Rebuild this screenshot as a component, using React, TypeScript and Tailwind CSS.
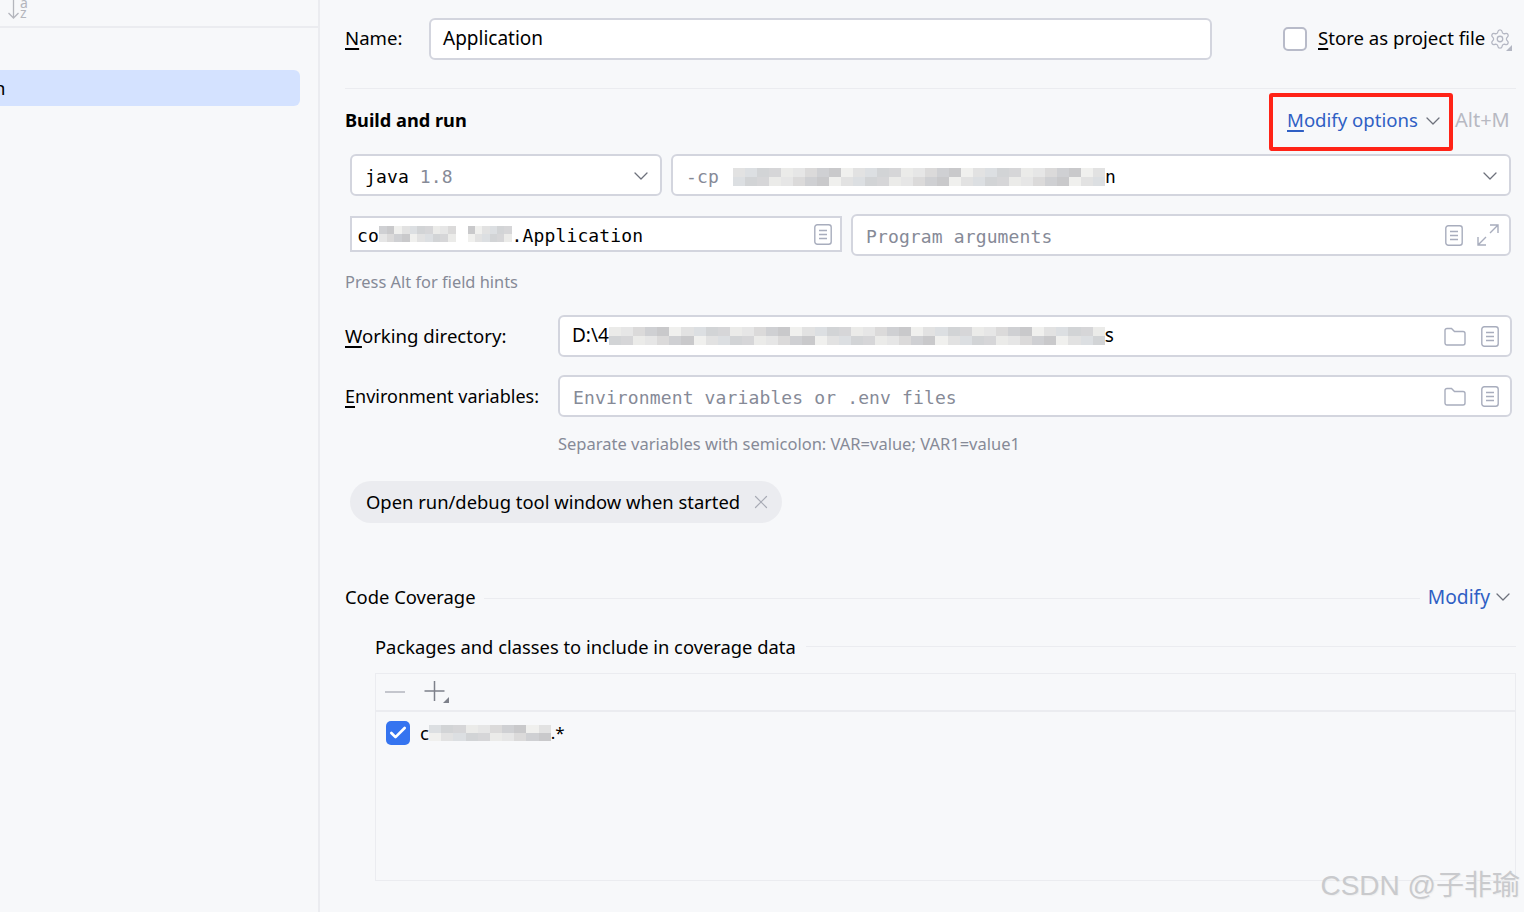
import React from 'react';
import { ChevronDown, X, Settings, Check } from 'lucide-react';

// --- Shared Components ---

const UI = "font-['Noto_Sans','Open_Sans',sans-serif]";
const MONO = "font-['DejaVu_Sans_Mono','Liberation_Mono',monospace] tracking-[0.13px]";

const Mosaic = ({ rows, cell = 12, high = 9 }: { rows: string[][], cell?: number, high?: number }) => (
    <span className="inline-flex flex-col align-middle shrink-0">
        {rows.map((row, i) => (
            <span key={i} className="flex">
                {row.map((c, j) => (
                    <span key={j} style={{ width: cell, height: high, backgroundColor: c }} />
                ))}
            </span>
        ))}
    </span>
);

const shades = ['#d6d6d8', '#e2e2e2', '#cfd0d3', '#ebebe9', '#dcdfe2', '#c9c9cb', '#e6e6e6', '#d2d4d6', '#f0f0ee', '#dbdada'];
const strip = (n: number, seed: number) => Array.from({ length: n }, (_, i) => shades[(i * 3 + seed) % shades.length]);

const NotesIcon = () => (
    <svg width="18" height="21" viewBox="0 0 18 21" fill="none" stroke="#a8adbd" strokeWidth="1.4">
        <rect x="0.8" y="0.8" width="16.4" height="19.4" rx="2.5" />
        <path d="M5 6.5h8M5 10.5h8M5 14.5h8" />
    </svg>
);

const FolderIcon = () => (
    <svg width="22" height="19" viewBox="0 0 22 19" fill="none" stroke="#a8adbd" strokeWidth="1.4">
        <path d="M1 3.5A2 2 0 0 1 3 1.5h4.5l3 3H19a2 2 0 0 1 2 2V16a2 2 0 0 1-2 2H3a2 2 0 0 1-2-2z" />
    </svg>
);

const ExpandIcon = () => (
    <svg width="22" height="22" viewBox="0 0 22 22" fill="none" stroke="#a8adbd" strokeWidth="1.4">
        <path d="M13 1h8v8M21 1l-8 8M1 13v8h8M1 21l8-8" />
    </svg>
);

const SortIcon = () => (
    <div className="flex items-start h-[26px] pl-2 overflow-hidden">
        <svg width="11" height="19" viewBox="0 0 11 19" fill="none" stroke="#b4b6bd" strokeWidth="1.3">
            <path d="M5.5 0v18M0.5 13l5 5 5-5" />
        </svg>
        <div className="flex flex-col text-[14px] leading-[9px] text-[#b4b6bd] ml-[1px] -mt-[2px]">
            <span>a</span>
            <span className="mt-[1px]">z</span>
        </div>
    </div>
);

const Field = ({ children, className }: { children: React.ReactNode, className: string }) => (
    <div className={`flex items-center shrink-0 bg-white border-2 border-[#d3d5de] rounded-[6px] h-[42px] ${className}`}>
        {children}
    </div>
);

const Mnemonic = ({ ch, rest, className = "decoration-black" }: { ch: string, rest: string, className?: string }) => (
    <span className="whitespace-nowrap">
        <span className={`underline underline-offset-[3px] decoration-2 ${className}`}>{ch}</span>{rest}
    </span>
);

const Chevron = ({ className = "" }: { className?: string }) => (
    <ChevronDown className={`w-[24px] h-[24px] shrink-0 text-[#6e717c] ${className}`} strokeWidth={1.3} />
);

const App = () => {
    return (
        <div className={`relative flex h-[912px] w-[1524px] overflow-hidden bg-[#f7f8fa] text-black text-[18.6px] whitespace-nowrap ${UI}`}>
            {/* Sidebar */}
            <aside className="w-[320px] shrink-0 border-r-2 border-[#ebecf0] h-full">
                <div className="h-[28px] border-b-2 border-[#ebecf0]">
                    <SortIcon />
                </div>
                <div className="mt-[42px] w-[300px] h-[36px] bg-[#d4e2ff] rounded-r-[6px] flex items-center overflow-hidden">
                    <span className="-ml-[6px] leading-none">n</span>
                </div>
            </aside>

            {/* Main */}
            <main className="flex-1 pl-[25px] pr-[8px] min-w-0">
                {/* Name row */}
                <div className="flex items-center mt-[18px] h-[42px]">
                    <div className="w-[84px] -mt-[2px]"><Mnemonic ch="N" rest="ame:" /></div>
                    <Field className="w-[783px] pl-[12px]"><span className="-mt-[2px] text-[19px]">Application</span></Field>
                    <div className="w-[24px] h-[24px] ml-[71px] shrink-0 bg-white border-2 border-[#b8bbc9] rounded-[5px]" />
                    <div className="ml-[11px] -mt-[2px]"><Mnemonic ch="S" rest="tore as project file" /></div>
                    <div className="relative ml-[4px] shrink-0">
                        <Settings className="w-[22px] h-[22px] text-[#b4b7c3]" strokeWidth={1.4} />
                        <svg className="absolute -right-[1px] -bottom-[1px]" width="6" height="6" viewBox="0 0 6 6">
                            <path d="M6 0v6H0z" fill="#b4b7c3" />
                        </svg>
                    </div>
                </div>

                <div className="mt-[28px] h-px bg-[#ebecf0]" />

                {/* Build and run header */}
                <div className="flex items-center h-[58px] mt-[4px]">
                    <span className="font-bold text-[18.2px] -mt-[3px]">Build and run</span>
                    <div className="ml-auto flex items-center h-[58px] w-[184px] border-[4px] border-[#ff2317] rounded-[3px] pl-[14px] text-[#2f5fc4]">
                        <span className="-mt-[4px] flex"><Mnemonic ch="M" rest="odify options" className="decoration-[#2f5fc4]" /></span>
                        <Chevron className="ml-[3px] -mt-[2px]" />
                    </div>
                    <span className="ml-[2px] w-[61px] text-[20px] text-[#b7b9c2] -mt-[4px]">Alt+M</span>
                </div>

                {/* java / classpath */}
                <div className={`flex mt-[3px] ml-[5px] gap-[9px] w-[1161px] text-[18px] ${MONO}`}>
                    <Field className="w-[312px] pl-[13px] pr-[7px] justify-between">
                        <span className="mt-[2px]">java <span className="text-[#868a97]">1.8</span></span>
                        <Chevron className="mt-[2px]" />
                    </Field>
                    <Field className="flex-1 pl-[13px] pr-[7px]">
                        <span className="text-[#868a97] mr-[14px] mt-[2px]">-cp</span>
                        <span className="flex mt-[3px]"><Mosaic rows={[strip(31, 1), strip(31, 4)]} cell={12} /></span>
                        <span className="mt-[2px]">n</span>
                        <Chevron className="ml-auto mt-[2px]" />
                    </Field>
                </div>

                {/* main class / program arguments */}
                <div className={`flex items-start mt-[18px] ml-[5px] gap-[9px] w-[1161px] text-[18px] ${MONO}`}>
                    <div className="flex items-center shrink-0 w-[492px] h-[36px] mt-[2px] -mb-[1px] bg-white border-2 border-[#d3d5de] pl-[5px] pr-[8px]">
                        <span className="mt-[2px]">co</span>
                        <Mosaic rows={[strip(10, 2), strip(10, 6)]} cell={7.7} high={8} />
                        <span className="w-[12px]" />
                        <Mosaic rows={[strip(6, 5), strip(6, 8)]} cell={7.3} high={8} />
                        <span className="mt-[2px]">.Application</span>
                        <span className="ml-auto flex"><NotesIcon /></span>
                    </div>
                    <Field className="flex-1 pl-[13px] pr-[10px] text-[#868a97]">
                        <span className="mt-[2px]">Program arguments</span>
                        <span className="ml-auto flex items-center gap-[14px]"><NotesIcon /><ExpandIcon /></span>
                    </Field>
                </div>

                <div className="mt-[13px] text-[#868a97] text-[16.4px] leading-[26px]">Press Alt for field hints</div>

                {/* Working directory */}
                <div className="flex items-center mt-[20px]">
                    <div className="w-[213px]"><Mnemonic ch="W" rest="orking directory:" /></div>
                    <Field className="w-[954px] pl-[12px] pr-[11px]">
                        <span className="-mt-[2px] text-[19px]">D:\4</span>
                        <Mosaic rows={[strip(41, 3), strip(41, 7)]} cell={12.1} />
                        <span className="-mt-[2px] text-[19px]">s</span>
                        <span className="ml-auto flex items-center gap-[15px]"><FolderIcon /><NotesIcon /></span>
                    </Field>
                </div>

                {/* Environment variables */}
                <div className="flex items-center mt-[18px]">
                    <div className="w-[213px] text-[18px]"><Mnemonic ch="E" rest="nvironment variables:" /></div>
                    <Field className={`w-[954px] pl-[13px] pr-[11px] text-[18px] text-[#868a97] ${MONO}`}>
                        <span className="mt-[2px]">Environment variables or .env files</span>
                        <span className="ml-auto flex items-center gap-[15px]"><FolderIcon /><NotesIcon /></span>
                    </Field>
                </div>

                <div className="mt-[13px] ml-[213px] text-[#868a97] text-[16.5px] leading-[28px]">
                    Separate variables with semicolon: VAR=value; VAR1=value1
                </div>

                {/* Chip */}
                <div className="mt-[23px] ml-[5px] flex items-center h-[42px] w-[432px] pl-[16px] bg-[#ebecf0] rounded-full">
                    <span className="text-[18.4px]">Open run/debug tool window when started</span>
                    <X className="w-[22px] h-[22px] ml-auto mr-[10px] text-[#a8abb5]" strokeWidth={1.3} />
                </div>

                {/* Code Coverage */}
                <div className="flex items-center mt-[60px] h-[30px]">
                    <span className="-mt-[2px] text-[18.4px]">Code Coverage</span>
                    <div className="ml-[8px] flex-1 h-px bg-[#ebecf0]" />
                    <span className="ml-[8px] -mt-[2px] text-[19.2px] text-[#2f5fc4]">Modify</span>
                    <Chevron className="ml-[1px] mr-[1px] -mt-[2px]" />
                </div>

                <div className="flex items-center mt-[20px] ml-[30px] h-[30px]">
                    <span className="-mt-[2px] text-[18.35px]">Packages and classes to include in coverage data</span>
                    <div className="ml-[10px] flex-1 h-px -mt-[4px] bg-[#ebecf0]" />
                </div>

                {/* Table */}
                <div className="mt-[10px] ml-[30px] h-[208px] border border-[#ebecf0]">
                    <div className="flex items-center h-[38px] border-b-2 border-[#ebecf0] pl-[9px]">
                        <div className="w-[20px] h-[1.5px] bg-[#c4c6cd]" />
                        <div className="ml-[19px] w-[26px] h-[24px]">
                            <svg width="26" height="24" viewBox="0 0 26 24" fill="none">
                                <path d="M10.5 1v20M0.5 11h20" stroke="#7d808a" strokeWidth="1.5" />
                                <path d="M25 17v6h-6z" fill="#7d808a" />
                            </svg>
                        </div>
                    </div>
                    <div className="flex items-center pl-[10px] mt-[7px]">
                        <div className="flex items-center justify-center w-[24px] h-[24px] rounded-[5px] bg-[#3574f0]">
                            <Check className="w-[20px] h-[20px] text-white" strokeWidth={3.2} />
                        </div>
                        <span className="ml-[10px]">c</span>
                        <Mosaic rows={[strip(10, 4), strip(10, 8)]} cell={12.2} high={8} />
                        <span className="text-[17px]">.*</span>
                    </div>
                </div>
            </main>

            {/* Watermark */}
            <div className="absolute right-[4px] bottom-[8px] text-[28px] leading-[36px] text-[#c9cacd] [text-shadow:1px_1px_1px_#eeeeee] font-['Liberation_Sans','Noto_Sans_CJK_SC',sans-serif]">
                CSDN @子非瑜
            </div>
        </div>
    );
};

export default App;
